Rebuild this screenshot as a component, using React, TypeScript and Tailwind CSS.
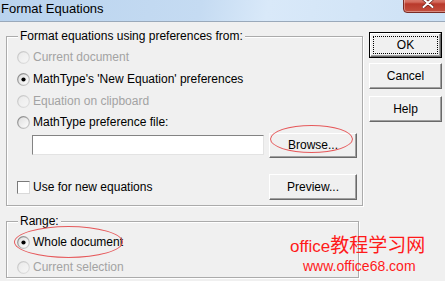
import React from 'react';

function Radio({ checked = false, disabled = false, id }: { checked?: boolean; disabled?: boolean; id: string }) {
  return (
    <svg width="13" height="13" viewBox="0 0 13 13" className="shrink-0" aria-hidden="true">
      <defs>
        <linearGradient id={`${id}-s`} x1="0" y1="0" x2="1" y2="1">
          <stop offset="0" stopColor={disabled ? '#c4c4c4' : '#7f7f7f'} />
          <stop offset="1" stopColor={disabled ? '#e2e2e2' : '#d4d4d4'} />
        </linearGradient>
        <linearGradient id={`${id}-f`} x1="0" y1="0" x2="1" y2="1">
          <stop offset="0" stopColor={disabled ? '#e9e9e9' : '#dcdcdc'} />
          <stop offset="1" stopColor={disabled ? '#f7f7f7' : '#ffffff'} />
        </linearGradient>
      </defs>
      <circle cx="6.5" cy="6.5" r="5.8" fill={`url(#${id}-f)`} stroke={`url(#${id}-s)`} strokeWidth="1.2" />
      {checked && <circle cx="6.5" cy="6.5" r="2.1" fill="#000" />}
    </svg>
  );
}

function RadioRow({ label, checked, disabled, id, h = 'h-[22px]' }: { label: string; checked?: boolean; disabled?: boolean; id: string; h?: string }) {
  return (
    <div className={`flex items-center gap-[3px] ${h}`}>
      <Radio id={id} checked={checked} disabled={disabled} />
      <span className={disabled ? 'text-[#a3a3a3]' : 'text-black'}>{label}</span>
    </div>
  );
}

function Button({ label, isDefault = false, className = '' }: { label: string; isDefault?: boolean; className?: string }) {
  return (
    <div className={`${isDefault ? 'border border-black' : ''} ${className}`}>
      <div className="relative h-full border-t border-l border-t-white border-l-white border-r border-b border-r-[#696969] border-b-[#696969] shadow-[inset_-1px_-1px_0_#a0a0a0] bg-[#f0f0f0] flex items-center justify-center">
        {isDefault && <div className="absolute inset-[2px] border border-dotted border-black" />}
        <span className="relative">{label}</span>
      </div>
    </div>
  );
}

export default function App() {
  return (
    <div className="relative w-[445px] h-[281px] overflow-hidden bg-[#f0f0f0] font-['Liberation_Sans',Arial,sans-serif] text-[12px] leading-[14px] text-black">
      {/* Title bar */}
      <div className="relative h-[22px] border-b border-[#9aa9ba] bg-[linear-gradient(100deg,#b9d3ee_0%,#c5dbf2_45%,#d9e9f9_60%,#cde1f5_100%)]">
        <span className="block pl-[1px] pt-[1px] text-[13px] leading-[15px] text-black">Format Equations</span>
        <div className="absolute left-[403px] top-[-7px] w-[46px] h-[20px] rounded-b-[4px] border border-[#7a2c25] bg-[linear-gradient(180deg,#e6a094_0%,#d36a5c_45%,#b9392b_55%,#c4503f_100%)] shadow-[inset_0_0_0_1px_rgba(255,255,255,0.35)]">
          <svg width="12" height="10" viewBox="0 0 12 10" className="absolute left-[18px] top-[4px]" aria-hidden="true">
            <path d="M1.5 1 L10.5 9 M10.5 1 L1.5 9" stroke="#5a1d18" strokeWidth="3.2" strokeLinecap="round" />
            <path d="M1.5 1 L10.5 9 M10.5 1 L1.5 9" stroke="#fff" strokeWidth="2" strokeLinecap="round" />
          </svg>
        </div>
      </div>

      {/* Body */}
      <div className="flex pl-[6px]">
        <div className="w-[357px] mt-[7px]">
          <fieldset className="border border-[#ababab] shadow-[inset_1px_1px_0_#fff,1px_1px_0_#fff] pl-[10px] pr-[5px] pb-[5px]">
            <legend className="ml-[1px] px-[2px] leading-[14px] bg-[#f0f0f0]">Format equations using preferences from:</legend>
            <div className="pt-[3px]">
              <RadioRow id="r1" label="Current document" disabled />
              <RadioRow id="r2" label="MathType's 'New Equation' preferences" checked />
              <RadioRow id="r3" label="Equation on clipboard" disabled />
              <RadioRow id="r4" label="MathType preference file:" h="h-[20px]" />
              <div className="flex items-center h-[26px]">
                <div className="ml-[15px] w-[232px] h-[20px] bg-white border-t border-l border-t-[#838383] border-l-[#838383] border-r border-b border-r-[#e3e3e3] border-b-[#e3e3e3]" />
                <Button label="Browse..." className="ml-auto w-[88px] h-[25px]" />
              </div>
              <div className="flex items-center h-[26px] mt-[16px]">
                <div className="w-[13px] h-[13px] bg-white border-t border-l border-t-[#7a7a7a] border-l-[#7a7a7a] border-r border-b border-r-[#d9d9d9] border-b-[#d9d9d9]" />
                <span className="ml-[3px]">Use for new equations</span>
                <Button label="Preview..." className="ml-auto w-[88px] h-[26px]" />
              </div>
            </div>
          </fieldset>

          <fieldset className="w-[353px] mt-[8px] border border-[#ababab] shadow-[inset_1px_1px_0_#fff,1px_1px_0_#fff] pl-[10px]">
            <legend className="ml-[1px] px-[2px] leading-[14px] bg-[#f0f0f0]">Range:</legend>
            <div className="pt-[4px] flex flex-col gap-[5px]">
              <RadioRow id="r5" label="Whole document" checked h="h-[20px]" />
              <RadioRow id="r6" label="Current selection" disabled h="h-[20px]" />
            </div>
          </fieldset>
        </div>

        <div className="ml-[6px] mt-[10px] w-[73px] flex flex-col">
          <Button label="OK" isDefault className="h-[26px]" />
          <Button label="Cancel" className="h-[26px] mt-[5px]" />
          <Button label="Help" className="h-[26px] mt-[7px]" />
        </div>
      </div>

      {/* Annotations */}
      <div className="absolute left-[270px] top-[125px] w-[83px] h-[28px] rounded-[50%] border border-[#e65a5c]" />
      <div className="absolute left-[14px] top-[226px] w-[109px] h-[32px] rounded-[50%] border border-[#e65a5c]" />

      {/* Watermark */}
      <div className="absolute left-[290px] top-[234px] text-[#ff1a1a] leading-[20px] whitespace-nowrap">
        <span className="text-[17px] font-['Liberation_Sans',sans-serif]">office</span>
        <span className="text-[19px] font-['Noto_Sans_CJK_SC',sans-serif]">教程学习网</span>
      </div>
      <div className="absolute left-[303px] top-[259px] text-[14px] leading-[14px] text-[#ff1a1a] whitespace-nowrap">www.office68.com</div>
    </div>
  );
}
